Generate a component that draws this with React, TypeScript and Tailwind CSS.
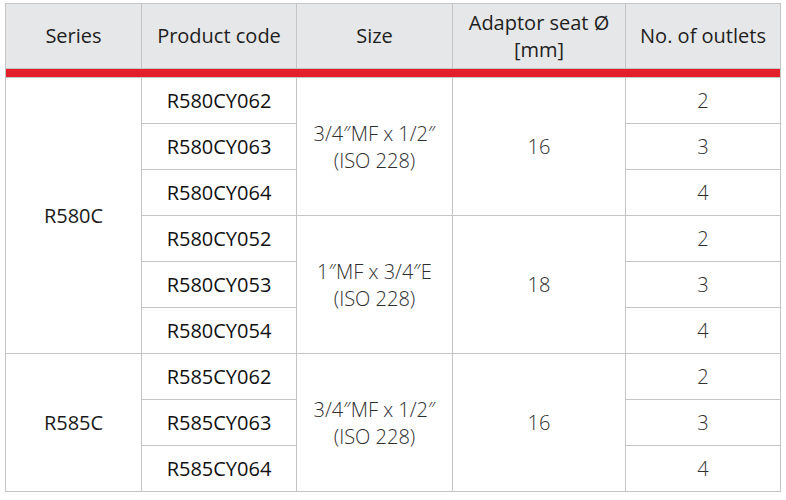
import React from "react";

const groups = [
  {
    series: "R580C",
    subs: [
      { size: ["3/4″MF x 1/2″", "(ISO 228)"], seat: "16", codes: ["R580CY062", "R580CY063", "R580CY064"] },
      { size: ["1″MF x 3/4″E", "(ISO 228)"], seat: "18", codes: ["R580CY052", "R580CY053", "R580CY054"] },
    ],
  },
  {
    series: "R585C",
    subs: [
      { size: ["3/4″MF x 1/2″", "(ISO 228)"], seat: "16", codes: ["R585CY062", "R585CY063", "R585CY064"] },
    ],
  },
];

const outlets = ["2", "3", "4"];

export default function App() {
  const cell = "border border-[#c4c4c4] text-center align-middle p-0";
  const rows: React.ReactNode[] = [];
  groups.forEach((g, gi) => {
    g.subs.forEach((s, si) => {
      s.codes.forEach((code, ci) => {
        rows.push(
          <tr key={`${gi}-${si}-${ci}`} className="h-[46px]">
            {si === 0 && ci === 0 && (
              <td rowSpan={g.subs.length * 3} className={`${cell} text-[#1a1a1a]`}>
                {g.series}
              </td>
            )}
            <td className={`${cell} text-[#111]`}>{code}</td>
            {ci === 0 && (
              <td rowSpan={3} className={`${cell} font-light text-[#2e2e2e] leading-[27px]`}>
                <div>{s.size[0]}</div>
                <div>{s.size[1]}</div>
              </td>
            )}
            {ci === 0 && (
              <td rowSpan={3} className={`${cell} font-light text-[#2e2e2e]`}>
                {s.seat}
              </td>
            )}
            <td className={`${cell} font-light text-[#2e2e2e]`}>{outlets[ci]}</td>
          </tr>
        );
      });
    });
  });

  return (
    <div className="w-[786px] h-[500px] bg-white pt-[3px] pl-[5px]" style={{ fontFamily: '"Open Sans", "Noto Sans", sans-serif' }}>
      <table className="border-collapse text-[20px] table-fixed w-[776px]">
        <colgroup>
          <col className="w-[136px]" />
          <col className="w-[155px]" />
          <col className="w-[156px]" />
          <col className="w-[173px]" />
          <col className="w-[155px]" />
        </colgroup>
        <thead>
          <tr className="h-[65px] bg-[#e6e7e8] text-[#1e1e1e]">
            <th className={`${cell} font-normal`}>Series</th>
            <th className={`${cell} font-normal`}>Product code</th>
            <th className={`${cell} font-normal`}>Size</th>
            <th className={`${cell} font-normal leading-[27px]`}>
              <div>Adaptor seat Ø</div>
              <div>[mm]</div>
            </th>
            <th className={`${cell} font-normal`}>No. of outlets</th>
          </tr>
          <tr className="h-[9px]">
            <td colSpan={5} className="p-0 h-[9px] bg-[#e3202a] border-x border-[#c4c4c4]"></td>
          </tr>
        </thead>
        <tbody>{rows}</tbody>
      </table>
    </div>
  );
}
